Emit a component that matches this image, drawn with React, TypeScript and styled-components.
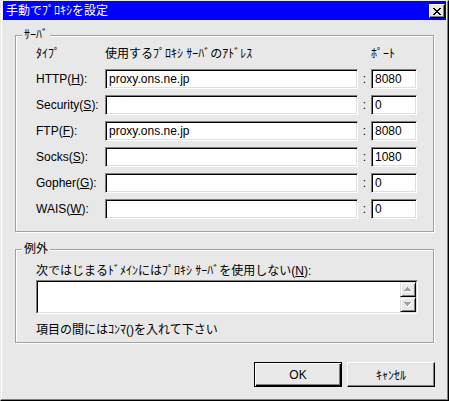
import React from "react";
import styled, { createGlobalStyle } from "styled-components";

const FACE = "#e8e8e8";
const FONT = `"Liberation Sans", "Noto Sans CJK JP", sans-serif`;

const Global = createGlobalStyle`
  html, body { margin: 0; padding: 0; background: ${FACE}; }
  body { font-family: ${FONT}; font-size: 12px; }
  * { box-sizing: border-box; }
`;

const Window = styled.div`
  width: 449px;
  height: 401px;
  background: ${FACE};
  border-style: solid;
  border-width: 1px;
  border-color: ${FACE} #000 #000 ${FACE};
  box-shadow: inset -1px -1px #808080, inset 1px 1px #fff;
  padding: 0 2px 2px 2px;
  display: flex;
  flex-direction: column;
  font-family: ${FONT};
  font-size: 12px;
  line-height: 14px;
  color: #000;
`;

const TitleBar = styled.div`
  height: 19px;
  background: #0000ff;
  display: flex;
  align-items: center;
  justify-content: space-between;
  padding: 0 1px 0 3px;
`;

const TitleText = styled.span`
  color: #fff;
  white-space: nowrap;
`;

const CloseButton = styled.button`
  width: 16px;
  height: 14px;
  padding: 0;
  margin: 1px 0 0 0;
  background: ${FACE};
  border-style: solid;
  border-width: 1px;
  border-color: #fff #000 #000 #fff;
  box-shadow: inset -1px -1px #808080;
  display: flex;
  align-items: center;
  justify-content: center;
`;

const Body = styled.div`
  flex: 1;
  display: flex;
  flex-direction: column;
  padding: 15px 12px 0 12px;
`;

const Group = styled.div<{ $pad: string }>`
  position: relative;
  border: 1px solid #a0a0a0;
  box-shadow: inset 1px 1px #fff, 1px 1px #fff;
  padding: ${(p) => p.$pad};
`;

const Legend = styled.span`
  position: absolute;
  top: -8px;
  left: 6px;
  padding: 0 2px;
  background: ${FACE};
  line-height: 14px;
  white-space: nowrap;
`;

const ServerGrid = styled.div`
  display: grid;
  grid-template-columns: 69px 253px 13px 46px;
  grid-template-rows: 16px repeat(6, 20px);
  row-gap: 6px;
`;

const HeaderCell = styled.span`
  white-space: nowrap;
  align-self: start;
`;

const Label = styled.label`
  white-space: nowrap;
  align-self: center;
`;

const Colon = styled.span`
  align-self: center;
  text-align: center;
`;

const Field = styled.input`
  width: 100%;
  height: 20px;
  margin: 0;
  padding: 0 3px;
  background: #fff;
  border-style: solid;
  border-width: 1px;
  border-color: #808080 #fff #fff #808080;
  box-shadow: inset 1px 1px #000, inset -1px -1px #dfdfdf;
  font-family: ${FONT};
  font-size: 12px;
  color: #000;
  outline: none;
`;

const Note = styled.div`
  white-space: nowrap;
  line-height: 14px;
`;

const ExceptionOuter = styled.div`
  width: 382px;
  height: 34px;
  margin: 2px 0 9px 0;
  border-style: solid;
  border-width: 1px;
  border-color: #808080 #fff #fff #808080;
`;

const ExceptionWell = styled.div`
  height: 100%;
  display: flex;
  background: #fff;
  border-style: solid;
  border-width: 1px;
  border-color: #000 #dfdfdf #dfdfdf #000;
`;

const ExceptionText = styled.textarea`
  flex: 1;
  border: none;
  resize: none;
  margin: 0;
  padding: 1px 2px;
  font-family: ${FONT};
  font-size: 12px;
  outline: none;
  background: #fff;
`;

const ScrollColumn = styled.div`
  width: 16px;
  display: flex;
  flex-direction: column;
`;

const ScrollButton = styled.div`
  height: 15px;
  background: ${FACE};
  border-style: solid;
  border-width: 1px;
  border-color: #dfdfdf #000 #000 #dfdfdf;
  box-shadow: inset 1px 1px #fff, inset -1px -1px #808080;
  display: flex;
  align-items: center;
  justify-content: center;
`;

const ButtonRow = styled.div`
  display: flex;
  justify-content: flex-end;
  gap: 5px;
  margin: 19px -1px 0 0;
`;

const PushButton = styled.button<{ $default?: boolean }>`
  width: 88px;
  height: 25px;
  margin: 0;
  padding: 0;
  background: ${FACE};
  font-family: ${FONT};
  font-size: 12px;
  color: #000;
  border-style: solid;
  border-width: 1px;
  border-color: ${(p) => (p.$default ? "#000" : "#fff #000 #000 #fff")};
  box-shadow: ${(p) =>
    p.$default
      ? "inset 1px 1px #fff, inset -1px -1px #000, inset -2px -2px #808080"
      : "inset -1px -1px #808080, inset 1px 1px #dfdfdf"};
`;

const CloseGlyph = () => (
  <svg width="8" height="7" viewBox="0 0 8 7" shapeRendering="crispEdges">
    <path
      fill="#000"
      d="M0 0h2v1H0zM6 0h2v1H6zM1 1h2v1H1zM5 1h2v1H5zM2 2h4v1H2zM3 3h2v1H3zM2 4h4v1H2zM1 5h2v1H1zM5 5h2v1H5zM0 6h2v1H0zM6 6h2v1H6z"
    />
  </svg>
);

const Arrow = ({ up }: { up: boolean }) => (
  <svg width="8" height="5" viewBox="0 0 8 5" shapeRendering="crispEdges">
    {up ? (
      <>
        <path fill="#fff" d="M4 1h1v1h1v1h1v1h1v1H1V4h1V3h1V2h1z" />
        <path fill="#a0a0a0" d="M3 0h1v1h1v1h1v1h1v1H0V3h1V2h1V1h1z" />
      </>
    ) : (
      <>
        <path fill="#fff" d="M1 1h7v1H7v1H6v1H5v1H4V4H3V3H2V2H1z" />
        <path fill="#a0a0a0" d="M0 0h7v1H6v1H5v1H4v1H3V3H2V2H1V1H0z" />
      </>
    )}
  </svg>
);

type Row = { name: string; key: string; host: string; port: string };

const rows: Row[] = [
  { name: "HTTP", key: "H", host: "proxy.ons.ne.jp", port: "8080" },
  { name: "Security", key: "S", host: "", port: "0" },
  { name: "FTP", key: "F", host: "proxy.ons.ne.jp", port: "8080" },
  { name: "Socks", key: "S", host: "", port: "1080" },
  { name: "Gopher", key: "G", host: "", port: "0" },
  { name: "WAIS", key: "W", host: "", port: "0" },
];

export default function App() {
  return (
    <>
      <Global />
      <Window>
        <TitleBar>
          <TitleText>手動でﾌﾟﾛｷｼを設定</TitleText>
          <CloseButton aria-label="閉じる">
            <CloseGlyph />
          </CloseButton>
        </TitleBar>
        <Body>
          <Group $pad="11px 14px 12px 20px">
            <Legend>ｻｰﾊﾞ</Legend>
            <ServerGrid>
              <HeaderCell>ﾀｲﾌﾟ</HeaderCell>
              <HeaderCell>使用するﾌﾟﾛｷｼ ｻｰﾊﾞのｱﾄﾞﾚｽ</HeaderCell>
              <span />
              <HeaderCell>ﾎﾟｰﾄ</HeaderCell>
              {rows.map((r) => (
                <React.Fragment key={r.name}>
                  <Label>
                    {r.name}(<u>{r.key}</u>):
                  </Label>
                  <Field readOnly value={r.host} />
                  <Colon>:</Colon>
                  <Field readOnly value={r.port} />
                </React.Fragment>
              ))}
            </ServerGrid>
          </Group>
          <Group $pad="14px 13px 5px 20px" style={{ marginTop: 17 }}>
            <Legend>例外</Legend>
            <Note>
              次ではじまるﾄﾞﾒｲﾝにはﾌﾟﾛｷｼ ｻｰﾊﾞを使用しない(<u>N</u>):
            </Note>
            <ExceptionOuter>
              <ExceptionWell>
                <ExceptionText readOnly value="" />
                <ScrollColumn>
                  <ScrollButton>
                    <Arrow up />
                  </ScrollButton>
                  <ScrollButton>
                    <Arrow up={false} />
                  </ScrollButton>
                </ScrollColumn>
              </ExceptionWell>
            </ExceptionOuter>
            <Note>項目の間にはｺﾝﾏ()を入れて下さい</Note>
          </Group>
          <ButtonRow>
            <PushButton $default>OK</PushButton>
            <PushButton>ｷｬﾝｾﾙ</PushButton>
          </ButtonRow>
        </Body>
      </Window>
    </>
  );
}
